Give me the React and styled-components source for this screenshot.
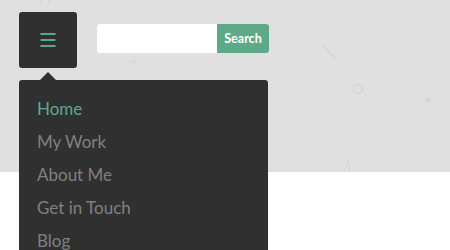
import React from 'react';
import styled, { createGlobalStyle } from 'styled-components';

const GlobalStyle = createGlobalStyle`
  html, body {
    margin: 0;
    padding: 0;
    background: #ffffff;
    font-family: Lato, "Liberation Sans", sans-serif;
  }
`;

const Page = styled.div`
  width: 450px;
  height: 250px;
  overflow: hidden;
  background: #ffffff;
`;

const Header = styled.header`
  position: relative;
  height: 172px;
  background: #e0e0e0;
  padding: 12px 0 0 19px;
  box-sizing: border-box;
  display: flex;
  align-items: flex-start;
  gap: 20px;
`;

const Decor = styled.svg`
  position: absolute;
  inset: 0;
  pointer-events: none;
`;

const MenuWrap = styled.div`
  position: relative;
  z-index: 1;
`;

const MenuButton = styled.button`
  width: 58px;
  height: 56px;
  border: 0;
  border-radius: 3px;
  background: #303030;
  display: flex;
  align-items: center;
  justify-content: center;
  padding: 0;
  cursor: pointer;
`;

const Dropdown = styled.ul`
  position: absolute;
  top: 68px;
  left: 0;
  width: 249px;
  margin: 0;
  padding: 12px 0 0 18px;
  box-sizing: border-box;
  list-style: none;
  background: #303030;
  border-radius: 3px 3px 0 0;

  &::before {
    content: '';
    position: absolute;
    top: -8px;
    left: 21px;
    border-left: 8px solid transparent;
    border-right: 8px solid transparent;
    border-bottom: 8px solid #303030;
  }
`;

const Item = styled.li`
  font-size: 17px;
  line-height: 33px;
  color: ${(p) => (p.$active ? '#5fa98b' : '#808080')};
  white-space: nowrap;
`;

const SearchForm = styled.form`
  position: relative;
  z-index: 1;
  display: flex;
  margin-top: 12px;
  height: 29px;
`;

const SearchInput = styled.input`
  width: 120px;
  height: 29px;
  box-sizing: border-box;
  border: 0;
  border-radius: 3px 0 0 3px;
  background: #ffffff;
  padding: 0 8px;
  outline: none;
`;

const SearchButton = styled.button`
  width: 52px;
  height: 29px;
  border: 0;
  border-radius: 0 3px 3px 0;
  background: #5fa98b;
  color: #ffffff;
  font-family: Lato, "Liberation Sans", sans-serif;
  font-weight: 700;
  font-size: 12.5px;
  padding: 0;
`;

const HamburgerIcon = () => (
  <svg width="16" height="14" viewBox="0 0 16 14">
    <g stroke="#5fa98b" strokeWidth="2">
      <line x1="0.5" y1="1" x2="15.5" y2="1" />
      <line x1="0.5" y1="7" x2="15.5" y2="7" />
      <line x1="0.5" y1="13" x2="15.5" y2="13" />
    </g>
  </svg>
);

const items = ['Home', 'My Work', 'About Me', 'Get in Touch', 'Blog'];

export default function App() {
  return (
    <Page>
      <GlobalStyle />
      <Header>
        <Decor width="450" height="172" viewBox="0 0 450 172">
          <g stroke="#d5d5d5" strokeWidth="1.2" fill="none">
            <line x1="322" y1="44" x2="337" y2="60" />
            <circle cx="358" cy="89" r="4.5" strokeWidth="1.8" />
            <path d="M344 172 L348 161 L350 172" />
            <path d="M42 5 L40 0 M48 5 L50 0" />
            <path d="M130 60 l3 3 l3 -3" />
          </g>
          <circle cx="428" cy="100" r="2.5" fill="#d5d5d5" />
        </Decor>
        <MenuWrap>
          <MenuButton type="button" aria-label="Menu">
            <HamburgerIcon />
          </MenuButton>
          <Dropdown>
            {items.map((label, i) => (
              <Item key={label} $active={i === 0}>
                {label}
              </Item>
            ))}
          </Dropdown>
        </MenuWrap>
        <SearchForm onSubmit={(e) => e.preventDefault()}>
          <SearchInput type="text" />
          <SearchButton type="submit">Search</SearchButton>
        </SearchForm>
      </Header>
    </Page>
  );
}
